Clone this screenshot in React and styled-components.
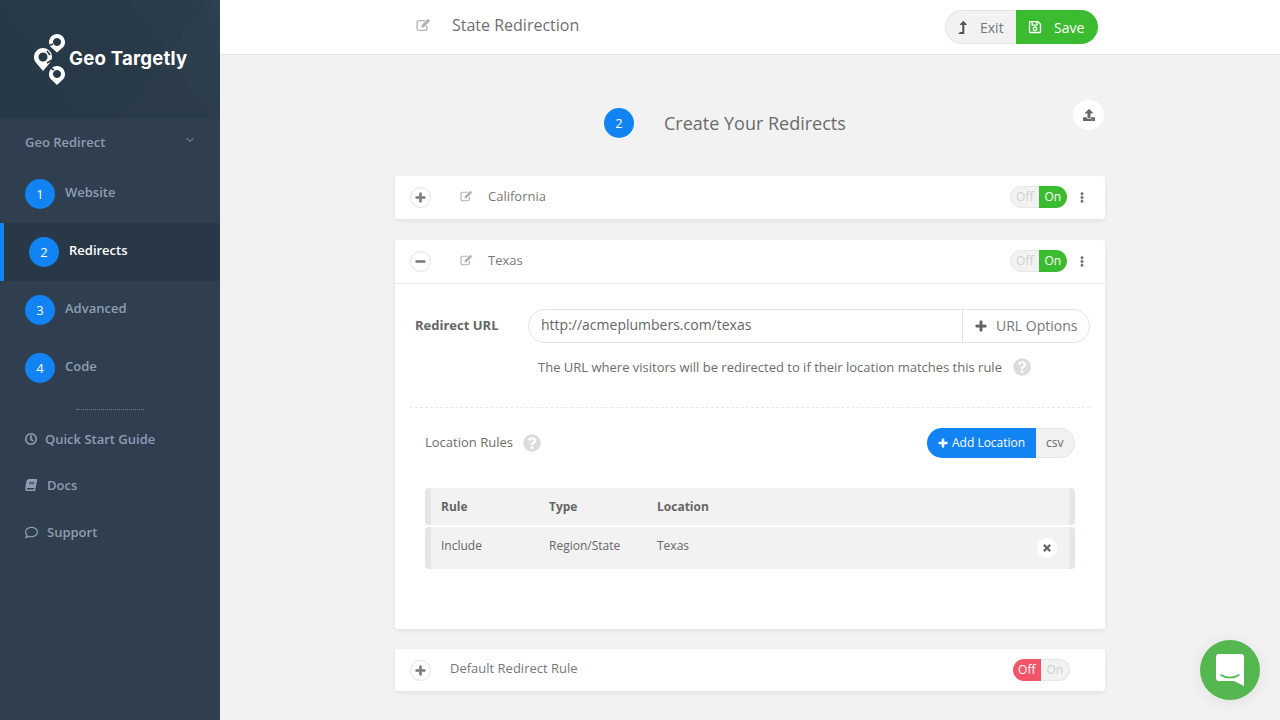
import styled, { createGlobalStyle } from "styled-components";
import { ChevronDown } from "lucide-react";
import {
  FaLevelUpAlt, FaRegSave, FaUpload, FaPlus, FaMinus, FaEllipsisV,
  FaTimes, FaQuestionCircle, FaRegClock, FaBook, FaRegComment,
} from "react-icons/fa";

const GlobalStyle = createGlobalStyle`
  html, body {
    margin: 0;
    height: 100%;
    overflow: hidden;
    background: #f2f2f2;
    font-family: "Open Sans", "Liberation Sans", sans-serif;
    color: #666;
  }
  * { box-sizing: border-box; }
`;

const Page = styled.div`
  display: flex;
  width: 1280px;
  height: 720px;
  overflow: hidden;
`;

/* sidebar */
const Sidebar = styled.aside`
  width: 220px;
  flex-shrink: 0;
  background: #2f3f4f;
  display: flex;
  flex-direction: column;
`;

const Brand = styled.div`
  height: 118px;
  display: flex;
  padding: 33px 0 0 34px;
  gap: 3px;
  background:
    linear-gradient(128deg, transparent 68%, rgba(255,255,255,0.01) 68%),
    linear-gradient(235deg, #2c3d4d 0%, #2a3b4b 30%, #283948 30.5%, #273847 100%);
`;

const BrandName = styled.div`
  font-family: "Inter", "Liberation Sans", sans-serif;
  font-weight: 700;
  font-size: 18.6px;
  letter-spacing: 0.2px;
  color: #fff;
  margin-top: 15px;
  line-height: 20px;
`;

const SectionHead = styled.div`
  height: 47px;
  padding: 0 24px 0 25px;
  display: flex;
  align-items: center;
  justify-content: space-between;
  font-size: 13px;
  font-weight: 600;
  color: #8d9db3;
  & svg { color: #9fadc0; margin-top: -4px; }
`;

const Step = styled.div`
  height: 58px;
  display: flex;
  align-items: flex-start;
  padding: 14px 0 0 25px;
  gap: 10px;
  background: ${(p) => (p.$active ? "#293847" : "transparent")};
  border-left: ${(p) => (p.$active ? "4px solid #1283f3" : "none")};
  font-size: 13px;
  font-weight: 600;
  color: ${(p) => (p.$active ? "#fff" : "#8d9db3")};
`;

const StepText = styled.span`
  line-height: 18px;
  margin-top: 4px;
`;

const NumberDot = styled.span`
  width: 30px;
  height: 30px;
  border-radius: 50%;
  background: #1283f3;
  color: #fff;
  font-size: 13px;
  font-weight: 400;
  display: flex;
  align-items: center;
  justify-content: center;
  flex-shrink: 0;
`;

const Dots = styled.div`
  width: 68px;
  margin: 12px 0 0 76px;
  border-top: 1px dotted #76838f;
`;

const SideLinks = styled.div`
  display: flex;
  flex-direction: column;
  padding: 20px 0 0 25px;
  gap: 28px;
`;

const SideLink = styled.div`
  display: flex;
  align-items: center;
  gap: ${(p) => p.$gap}px;
  font-size: 13px;
  font-weight: 600;
  line-height: 18px;
  color: #8d9db3;
  &:last-child { margin-top: 1px; }
`;

const BoldClock = styled(FaRegClock)`
  stroke: currentColor;
  stroke-width: 24;
`;

const SlantBook = styled(FaBook)`
  transform: skewX(-10deg);
`;

/* main column */
const Main = styled.main`
  flex: 1;
  display: flex;
  flex-direction: column;
  align-items: center;
`;

const TopBar = styled.header`
  width: 100%;
  height: 55px;
  flex-shrink: 0;
  background: #fff;
  border-bottom: 1px solid #e6e6e6;
  display: flex;
  justify-content: center;
`;

const TopInner = styled.div`
  width: 710px;
  display: flex;
  align-items: flex-start;
  padding: 10px 7px 0 21px;
`;

const PageTitle = styled.div`
  display: flex;
  align-items: center;
  gap: 21px;
  font-size: 16px;
  color: #6f6f6f;
  height: 30px;
`;

const TopActions = styled.div`
  margin-left: auto;
  display: flex;
  height: 34px;
`;

const ExitButton = styled.div`
  width: 71px;
  background: #f2f2f2;
  border: 1px solid #e4e4e4;
  border-right: none;
  border-radius: 17px 0 0 17px;
  display: flex;
  align-items: center;
  padding-left: 10px;
  gap: 11px;
  font-size: 14px;
  color: #777;
  & svg { color: #555; }
`;

const SaveButton = styled.div`
  width: 82px;
  background: #3bbb2f;
  border-radius: 0 17px 17px 0;
  display: flex;
  align-items: center;
  padding-left: 12px;
  gap: 12px;
  font-size: 14px;
  color: #fff;
`;

const Content = styled.div`
  width: 710px;
  display: flex;
  flex-direction: column;
`;

const StepHeading = styled.div`
  display: flex;
  height: 121px;
  padding: 53px 1px 0 209px;
  align-items: flex-start;
`;

const HeadingText = styled.div`
  margin-left: 30px;
  font-size: 18px;
  line-height: 30px;
  color: #6b6b6b;
`;

const RoundIcon = styled.div`
  width: 31px;
  height: 30px;
  margin-left: auto;
  margin-top: -8px;
  border-radius: 50%;
  background: #fff;
  color: #666;
  display: flex;
  align-items: center;
  justify-content: center;
`;

const Card = styled.section`
  background: #fff;
  border-radius: 3px;
  box-shadow: 0 2px 5px rgba(0,0,0,0.07);
  margin-bottom: ${(p) => p.$gap}px;
`;

const CardHead = styled.div`
  height: ${(p) => p.$h}px;
  display: flex;
  align-items: flex-start;
  padding: 11px 18px 0 15px;
  border-bottom: ${(p) => (p.$open ? "1px solid #ececec" : "none")};
`;

const Toggler = styled.div`
  width: 21px;
  height: 21px;
  border-radius: 50%;
  border: 1px solid #e3e3e3;
  color: #7d7d7d;
  display: flex;
  align-items: center;
  justify-content: center;
  flex-shrink: 0;
  & svg { stroke: currentColor; stroke-width: 30; }
`;

const EditSlot = styled.span`
  margin-left: 29px;
  margin-top: -1px;
  display: flex;
  align-items: center;
  height: 20px;
`;

const CardName = styled.div`
  margin-left: ${(p) => p.$left}px;
  margin-top: ${(p) => p.$up}px;
  font-size: 13px;
  line-height: 20px;
  color: #777;
`;

const Switch = styled.div`
  margin-left: auto;
  margin-top: -1px;
  display: flex;
  height: 22px;
  width: 57px;
  font-size: 12px;
  line-height: 20px;
  margin-right: ${(p) => p.$right}px;
`;

const SwitchPart = styled.div`
  flex: ${(p) => p.$size} 0 0;
  display: flex;
  align-items: center;
  justify-content: center;
  color: ${(p) => (p.$color ? "#fff" : "#cfcfcf")};
  background: ${(p) => p.$color || "#f2f2f2"};
  border: ${(p) => (p.$color ? "none" : "1px solid #e6e6e6")};
  border-${(p) => (p.$first ? "right" : "left")}: none;
  border-radius: ${(p) => (p.$first ? "11px 0 0 11px" : "0 11px 11px 0")};
`;

const MoreIcon = styled.span`
  color: #777;
  display: flex;
  align-items: center;
  margin-top: -1px;
  height: 22px;
  width: 10px;
  margin-left: 10px;
`;

const CardBody = styled.div`
  height: 345px;
  padding: 25px 15px 0 15px;
`;

const UrlRow = styled.div`
  display: flex;
  align-items: center;
  padding-left: 5px;
`;

const UrlLabel = styled.label`
  width: 113px;
  font-size: 13px;
  font-weight: 700;
  color: #666;
  margin-top: -2px;
`;

const UrlField = styled.div`
  flex: 1;
  height: 34px;
  display: flex;
  border: 1px solid #e4e4e4;
  border-radius: 17px;
  font-size: 14px;
  color: #666;
`;

const UrlValue = styled.div`
  flex: 1;
  padding-left: 12px;
  line-height: 30px;
  border-right: 1px solid #e4e4e4;
`;

const UrlOptions = styled.div`
  width: 126px;
  display: flex;
  align-items: center;
  padding: 0 0 2px 12px;
  gap: 9px;
  color: #777;
  & svg { color: #666; stroke: currentColor; stroke-width: 30; margin-top: 2px; }
`;

const Hint = styled.div`
  display: flex;
  align-items: center;
  height: 20px;
  margin: 14px 0 0 128px;
  font-size: 13px;
  color: #6d6d6d;
`;

const HelpIcon = styled.span`
  display: flex;
  color: #dcdcdc;
  margin-left: ${(p) => p.$left}px;
`;

const DashLine = styled.div`
  margin-top: 30px;
  border-top: 1px dashed #e8e8e8;
`;

const RulesBar = styled.div`
  display: flex;
  align-items: center;
  padding: 20px 15px 0 15px;
`;

const RulesTitle = styled.div`
  font-size: 13px;
  color: #6d6d6d;
  margin-top: -2px;
`;

const AddButton = styled.div`
  margin-left: auto;
  width: 109px;
  height: 30px;
  background: #1283f3;
  color: #fff;
  border-radius: 15px 0 0 15px;
  font-size: 12px;
  display: flex;
  align-items: center;
  padding: 0 0 1px 11px;
  gap: 4px;
  & svg { stroke: currentColor; stroke-width: 30; }
`;

const CsvButton = styled.div`
  width: 39px;
  height: 30px;
  background: #f2f2f2;
  border: 1px solid #e6e6e6;
  border-left: none;
  border-radius: 0 15px 15px 0;
  font-size: 12px;
  color: #666;
  display: flex;
  align-items: center;
  padding: 0 0 1px 10px;
`;

const Table = styled.div`
  margin: 30px 15px 0 15px;
  display: flex;
  flex-direction: column;
  gap: 2px;
`;

const Row = styled.div`
  height: ${(p) => p.$h}px;
  display: grid;
  grid-template-columns: 108px 108px 1fr 28px;
  align-items: center;
  padding: 0 20px 0 10px;
  background: #f2f2f2;
  border-left: 6px solid #e4e7ea;
  border-right: 6px solid #e4e7ea;
  border-radius: 4px;
  font-size: 12px;
  font-weight: ${(p) => (p.$head ? 700 : 400)};
  color: #666;
`;

const RowText = styled.span`
  margin-top: -6px;
`;

const RemoveDot = styled.span`
  width: 20px;
  height: 20px;
  border-radius: 50%;
  background: #fff;
  color: #666;
  display: flex;
  align-items: center;
  justify-content: center;
  justify-self: end;
  margin-right: -8px;
  & svg { stroke: currentColor; stroke-width: 40; }
`;

const ChatBubble = styled.div`
  position: fixed;
  left: 1200px;
  top: 640px;
  width: 60px;
  height: 60px;
  border-radius: 50%;
  background: #55b750;
  box-shadow: 0 2px 16px rgba(0,0,0,0.08);
  display: flex;
  align-items: center;
  justify-content: center;
`;

const Pin = ({ cx, cy, r, tip, gap }) => {
  const dx = r * 0.82;
  const dy = r * 0.58;
  const hole = r * 0.5;
  return (
    <>
      <path
        fillRule="evenodd"
        fill="#fff"
        d={`M${cx} ${tip}L${cx - dx} ${cy + dy}A${r} ${r} 0 1 1 ${cx + dx} ${cy + dy}Z
            M${cx} ${cy - hole}a${hole} ${hole} 0 1 0 0.01 0Z`}
      />
      {gap && <path d={gap} stroke="#283a49" strokeWidth="1.6" fill="none" />}
    </>
  );
};

const Logo = () => (
  <svg width="32" height="52" viewBox="0 0 32 52">
    <Pin cx={23} cy={9} r={8} tip={19.5} gap="M14 13L19 11" />
    <Pin cx={9} cy={24} r={9} tip={38} gap="M13 18L16 22M13 30L18 27" />
    <Pin cx={23} cy={41} r={8} tip={52} gap="M15 34L20 37" />
  </svg>
);

// pencil-in-a-square, filled pencil over an open outline
const EditIcon = ({ size = 14 }) => (
  <svg width={size} height={size * 0.9} viewBox="0 0 20 18">
    <path
      d="M14.5 10.5V14a2.5 2.5 0 0 1-2.5 2.5H4A2.5 2.5 0 0 1 1.5 14V6A2.5 2.5 0 0 1 4 3.5h8"
      fill="none"
      stroke="#b3b3b3"
      strokeWidth="1.8"
    />
    <path d="M7 13L7.6 9.4 16 1l3 3-8.4 8.4Z" fill="#b3b3b3" />
  </svg>
);

const steps = [
  { n: 1, label: "Website" },
  { n: 2, label: "Redirects", active: true },
  { n: 3, label: "Advanced" },
  { n: 4, label: "Code" },
];

export default function App() {
  return (
    <Page>
      <GlobalStyle />
      <Sidebar>
        <Brand>
          <Logo />
          <BrandName>Geo Targetly</BrandName>
        </Brand>
        <SectionHead>
          Geo Redirect
          <ChevronDown size={12} strokeWidth={1.8} />
        </SectionHead>
        {steps.map((s) => (
          <Step key={s.n} $active={s.active}>
            <NumberDot>{s.n}</NumberDot>
            <StepText>{s.label}</StepText>
          </Step>
        ))}
        <Dots />
        <SideLinks>
          <SideLink $gap={8}><BoldClock size={12} />Quick Start Guide</SideLink>
          <SideLink $gap={10}><SlantBook size={12} />Docs</SideLink>
          <SideLink $gap={9}><FaRegComment size={13} />Support</SideLink>
        </SideLinks>
      </Sidebar>

      <Main>
        <TopBar>
          <TopInner>
            <PageTitle><EditIcon size={15} />State Redirection</PageTitle>
            <TopActions>
              <ExitButton><FaLevelUpAlt size={13} />Exit</ExitButton>
              <SaveButton><FaRegSave size={14} />Save</SaveButton>
            </TopActions>
          </TopInner>
        </TopBar>

        <Content>
          <StepHeading>
            <NumberDot>2</NumberDot>
            <HeadingText>Create Your Redirects</HeadingText>
            <RoundIcon><FaUpload size={12} /></RoundIcon>
          </StepHeading>

          <Card $gap={21}>
            <CardHead $h={43}>
              <Toggler><FaPlus size={11} /></Toggler>
              <EditSlot><EditIcon size={13} /></EditSlot>
              <CardName $left={15} $up={-1}>California</CardName>
              <Switch $right={0}>
                <SwitchPart $size={28} $first>Off</SwitchPart>
                <SwitchPart $size={29} $color="#3bbb2f">On</SwitchPart>
              </Switch>
              <MoreIcon><FaEllipsisV size={11} /></MoreIcon>
            </CardHead>
          </Card>

          <Card $gap={20}>
            <CardHead $h={44} $open>
              <Toggler><FaMinus size={11} /></Toggler>
              <EditSlot><EditIcon size={13} /></EditSlot>
              <CardName $left={15} $up={-1}>Texas</CardName>
              <Switch $right={0}>
                <SwitchPart $size={28} $first>Off</SwitchPart>
                <SwitchPart $size={29} $color="#3bbb2f">On</SwitchPart>
              </Switch>
              <MoreIcon><FaEllipsisV size={11} /></MoreIcon>
            </CardHead>
            <CardBody>
              <UrlRow>
                <UrlLabel>Redirect URL</UrlLabel>
                <UrlField>
                  <UrlValue>http://acmeplumbers.com/texas</UrlValue>
                  <UrlOptions><FaPlus size={12} />URL Options</UrlOptions>
                </UrlField>
              </UrlRow>
              <Hint>
                The URL where visitors will be redirected to if their location matches this rule
                <HelpIcon $left={11}><FaQuestionCircle size={18} /></HelpIcon>
              </Hint>
              <DashLine />
              <RulesBar>
                <RulesTitle>Location Rules</RulesTitle>
                <HelpIcon $left={10}><FaQuestionCircle size={18} /></HelpIcon>
                <AddButton><FaPlus size={10} />Add Location</AddButton>
                <CsvButton>csv</CsvButton>
              </RulesBar>
              <Table>
                <Row $h={37} $head>
                  <span>Rule</span><span>Type</span><span>Location</span><span />
                </Row>
                <Row $h={42}>
                  <RowText>Include</RowText><RowText>Region/State</RowText><RowText>Texas</RowText>
                  <RemoveDot><FaTimes size={10} /></RemoveDot>
                </Row>
              </Table>
            </CardBody>
          </Card>

          <Card $gap={0}>
            <CardHead $h={42}>
              <Toggler><FaPlus size={11} /></Toggler>
              <CardName $left={19} $up={-2}>Default Redirect Rule</CardName>
              <Switch $right={17}>
                <SwitchPart $size={28} $first $color="#f25468">Off</SwitchPart>
                <SwitchPart $size={29}>On</SwitchPart>
              </Switch>
            </CardHead>
          </Card>
        </Content>
      </Main>

      <ChatBubble>
        <svg width="28" height="32" viewBox="0 0 28 32">
          <path d="M3 0H25a3 3 0 0 1 3 3V32L18 27H3a3 3 0 0 1-3-3V3a3 3 0 0 1 3-3Z" fill="#fff" />
          <path d="M5 21C10 24.5 18 24.5 23 21" stroke="#55b750" strokeWidth="1.6" fill="none" strokeLinecap="round" />
        </svg>
      </ChatBubble>
    </Page>
  );
}
